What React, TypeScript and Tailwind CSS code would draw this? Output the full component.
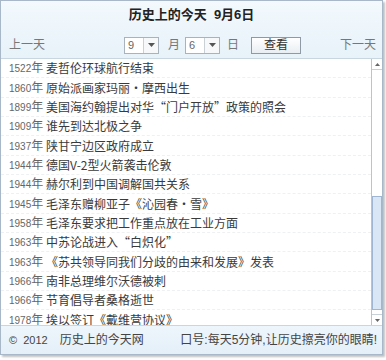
import React from 'react';

const events: [string, string][] = [
  ['1522', '麦哲伦环球航行结束'],
  ['1860', '原始派画家玛丽·摩西出生'],
  ['1899', '美国海约翰提出对华“门户开放”政策的照会'],
  ['1909', '谁先到达北极之争'],
  ['1937', '陕甘宁边区政府成立'],
  ['1944', '德国V-2型火箭袭击伦敦'],
  ['1944', '赫尔利到中国调解国共关系'],
  ['1945', '毛泽东赠柳亚子《沁园春·雪》'],
  ['1958', '毛泽东要求把工作重点放在工业方面'],
  ['1963', '中苏论战进入“白炽化”'],
  ['1963', '《苏共领导同我们分歧的由来和发展》发表'],
  ['1966', '南非总理维尔沃德被刺'],
  ['1966', '节育倡导者桑格逝世'],
  ['1978', '埃以签订《戴维营协议》'],
];

const font = { fontFamily: '"Liberation Sans", "Noto Sans CJK SC", sans-serif' };
const cjk = { fontFamily: '"Noto Sans CJK SC", "Liberation Sans", sans-serif' };

function Select({ value }: { value: string }) {
  return (
    <div className="flex h-[17px] w-[35px] border border-[#a9b3bd] bg-white">
      <div className="flex-1 pl-[3px] text-[11px] leading-[15px] text-[#666]">{value}</div>
      <div className="flex w-[15px] items-center justify-center border-l border-[#c9d0d6] bg-[#f6f8fa]">
        <svg width="7" height="4" viewBox="0 0 7 4">
          <path d="M0 0h7L3.5 4z" fill="#555" />
        </svg>
      </div>
    </div>
  );
}

export default function App() {
  return (
    <div className="h-[360px] w-[386px] bg-white" style={font}>
      <div className="flex h-[355px] w-[383px] flex-col border border-[#a8b8c8] shadow-[2px_2px_2px_rgba(0,0,0,0.25)]">
        <div className="h-[58px] border-b border-[#c8d6e2] bg-gradient-to-b from-[#f3f9fd] to-[#e7f2f9]">
          <div className="pt-[4px] text-center text-[13px] font-bold leading-[20px] text-[#222]">
            历史上的今天&nbsp; 9月6日
          </div>
          <div className="mt-[11px] flex items-center pl-[8px] pr-[6px] text-[12px] text-[#777]">
            <span className="w-[115px]">上一天</span>
            <Select value="9" />
            <span className="ml-[9px] mr-[5px]">月</span>
            <Select value="6" />
            <span className="ml-[7px] mr-[12px]">日</span>
            <button className="h-[17px] w-[50px] border border-[#8e9aa6] bg-gradient-to-b from-white to-[#e9eef3] text-[12px] leading-[14px] text-[#333]">
              查看
            </button>
            <span className="ml-auto">下一天</span>
          </div>
        </div>
        <div className="flex h-[266px] bg-white">
          <div className="flex-1 overflow-hidden">
            {events.map(([y, t], i) => (
              <div
                key={i}
                className="flex h-[19.35px] items-center border-b border-dashed border-[#eef0f2] pl-[8px] text-[12px] text-[#3a3a3a]"
              >
                <span className="w-[37px] shrink-0 text-[10px] text-[#666]">
                  {y}
                  <span className="text-[12px]">年</span>
                </span>
                <span className="whitespace-nowrap" style={cjk}>{t}</span>
              </div>
            ))}
          </div>
          <div className="flex w-[11px] flex-col border-l border-[#b8c4d0] bg-white">
            <div className="flex h-[11px] items-center justify-center border-b border-[#c8d0d8]">
              <svg width="5" height="3" viewBox="0 0 5 3">
                <path d="M0 3h5L2.5 0z" fill="#666" />
              </svg>
            </div>
            <div className="h-[126px]" />
            <div className="h-[114px] border border-[#9fb6d2] bg-[#d9e6f6]" />
            <div className="flex-1" />
            <div className="flex h-[11px] items-center justify-center border-t border-[#c8d0d8]">
              <svg width="5" height="3" viewBox="0 0 5 3">
                <path d="M0 0h5L2.5 3z" fill="#666" />
              </svg>
            </div>
          </div>
        </div>
        <div className="flex flex-1 items-center border-t border-[#c8d6e2] bg-gradient-to-b from-[#eef6fc] to-[#e4eff8] pl-[8px] pr-[5px] text-[12px] text-[#444]">
          <span className="text-[11px]">©&nbsp; 2012</span>
          <span className="ml-[12px]">历史上的今天网</span>
          <span className="ml-auto">口号:每天5分钟,让历史擦亮你的眼睛!</span>
        </div>
      </div>
    </div>
  );
}
